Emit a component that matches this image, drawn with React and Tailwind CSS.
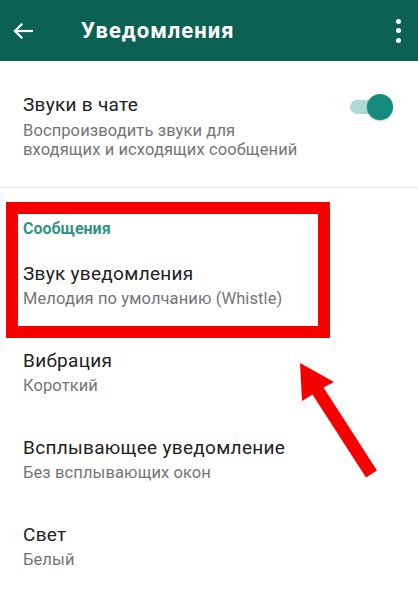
export default function App() {
  const rows = [
    { title: "Вибрация", sub: "Короткий" },
    { title: "Всплывающее уведомление", sub: "Без всплывающих окон" },
    { title: "Свет", sub: "Белый" },
  ];

  return (
    <div
      className="relative w-[418px] h-[593px] overflow-hidden bg-white"
      style={{ fontFamily: "Roboto, 'Noto Sans', sans-serif" }}
    >
      {/* toolbar */}
      <div className="h-[61px] bg-[#0b6152] flex items-center text-white">
        <div className="w-[81px] pl-[13px] flex items-center">
          <svg width="20" height="16" viewBox="0 0 20 16" fill="none" stroke="white" strokeWidth="2.2" strokeLinecap="square">
            <path d="M2 8 H19" />
            <path d="M8.5 1.5 L2 8 L8.5 14.5" />
          </svg>
        </div>
        <h1 className="flex-1 text-[22px] leading-[28px] font-bold tracking-[1px]">Уведомления</h1>
        <div className="w-[38px] flex flex-col items-center gap-[4.5px] pr-[2px]">
          <span className="w-[5px] h-[5px] rounded-full bg-white" />
          <span className="w-[5px] h-[5px] rounded-full bg-white" />
          <span className="w-[5px] h-[5px] rounded-full bg-white" />
        </div>
      </div>

      {/* chat sounds */}
      <div className="flex items-start pl-[23px] pr-[26px] pt-[32px] pb-[28px] border-b border-[#e6e6e6]">
        <div className="flex-1">
          <p className="text-[19px] leading-[24px] tracking-[0.3px] text-[#212121]">Звуки в чате</p>
          <p className="mt-[4px] text-[16.5px] leading-[19px] tracking-[0.1px] text-[#757575]">
            Воспроизводить звуки для
            <br />
            входящих и исходящих сообщений
          </p>
        </div>
        <div className="relative w-[42px] h-[26px] mt-[1px] flex items-center">
          <div className="w-[35px] h-[14px] rounded-full bg-[#acdad2]" />
          <div className="absolute -right-[1px] top-0 w-[26px] h-[26px] rounded-full bg-[#138a7b] shadow-[0_1px_2px_rgba(0,0,0,0.25)]" />
        </div>
      </div>

      {/* messages section */}
      <p className="pl-[23px] pt-[31px] text-[16px] leading-[20px] font-bold text-[#2f9483]">Сообщения</p>
      <div className="pl-[23px] pt-[23px] pb-[18px]">
        <p className="text-[19px] leading-[24px] tracking-[0.3px] text-[#212121]">Звук уведомления</p>
        <p className="mt-[3px] text-[16.5px] leading-[19px] tracking-[0.1px] text-[#757575]">Мелодия по умолчанию (Whistle)</p>
      </div>
      {rows.map((r) => (
        <div key={r.title} className="pl-[23px] pt-[23px] pb-[18px]">
          <p className="text-[19px] leading-[24px] tracking-[0.3px] text-[#212121]">{r.title}</p>
          <p className="mt-[3px] text-[16.5px] leading-[19px] tracking-[0.1px] text-[#757575]">{r.sub}</p>
        </div>
      ))}

      {/* annotation: highlight box */}
      <div className="absolute left-[6px] top-[202px] w-[324px] h-[136px] border-[12px] border-[#f60000]" />

      {/* annotation: arrow */}
      <svg className="absolute left-0 top-0 pointer-events-none" width="418" height="593" viewBox="0 0 418 593">
        <polygon
          fill="#f60000"
          points="300,363 334,382 323.5,387.5 377,470.5 366,477.5 312.5,394.5 302,401"
        />
      </svg>
    </div>
  );
}
